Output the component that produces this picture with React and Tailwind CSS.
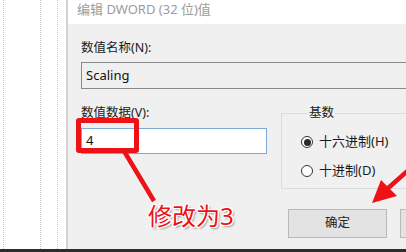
const RadioDot = ({ checked }) => (
    <span className="w-[12px] h-[12px] rounded-full border border-[#333] bg-white flex items-center justify-center">
        {checked && <span className="w-[7px] h-[7px] rounded-full bg-[#2a2a2a]" />}
    </span>
)

const App = () => {
    return (
        <div
            className="relative w-[406px] h-[252px] overflow-hidden flex flex-col bg-white text-[#1a1a1a]"
            style={{ fontFamily: '"Noto Sans", "Noto Sans CJK SC", sans-serif' }}>
            <div className="flex-1 flex min-h-0">
                {/* dotted column guides of the window behind */}
                <div className="w-[66px] flex shrink-0">
                    <div className="ml-[3px] h-full border-l border-dotted border-[#c4c4c4]" />
                    <div className="ml-[36px] h-full border-l border-dotted border-[#c4c4c4]" />
                    <div className="ml-[16px] h-full border-l border-dotted border-[#c4c4c4]" />
                </div>

                <div className="flex-1 flex flex-col border-l-2 border-[#d2d2d2] min-w-0">
                    <div className="h-[24px] bg-white pl-[9px] pt-[1px] text-[13px] leading-[16px] text-[#9c9c9c] whitespace-nowrap">
                        编辑 DWORD (32 位)值
                    </div>

                    <div className="flex-1 bg-[#f0f0f0] pl-[13px] pt-[16px] text-[12.5px]">
                        <div className="leading-[16px] h-[16px] whitespace-nowrap">数值名称(N):</div>
                        <div className="mt-[6px] h-[27px] w-[340px] border border-[#8a8a8a] bg-[#f0f0f0] pl-[4px] flex items-center text-[13px] text-[#111]">
                            Scaling
                        </div>

                        <div className="mt-[16px] flex">
                            <div className="w-[186px] shrink-0">
                                <div className="leading-[16px] h-[16px] whitespace-nowrap">数值数据(V):</div>
                                <div className="mt-[7px] h-[26px] border border-[#7ea7d8] bg-white pl-[4px] flex items-center text-[13px] text-[#111]">
                                    4
                                </div>
                            </div>

                            <fieldset className="ml-[14px] w-[160px] shrink-0 border border-[#dcdcdc] pl-[19px] pb-[7px]">
                                <legend className="ml-[7px] px-[1px] leading-[16px]">基数</legend>
                                <div className="mt-[11px] h-[20px] flex items-center gap-[6px] whitespace-nowrap text-[13px]">
                                    <RadioDot checked />
                                    十六进制(H)
                                </div>
                                <div className="mt-[9px] h-[20px] flex items-center gap-[6px] whitespace-nowrap text-[13px]">
                                    <RadioDot />
                                    十进制(D)
                                </div>
                            </fieldset>
                        </div>

                        <div className="mt-[20px] ml-[207px] flex gap-[13px]">
                            <button className="w-[99px] h-[29px] shrink-0 bg-[#e3e3e3] border border-[#b9b9b9] text-[12.5px] text-[#222]">
                                确定
                            </button>
                            <button className="w-[99px] h-[29px] shrink-0 bg-[#e3e3e3] border border-[#b9b9b9]" />
                        </div>
                    </div>
                </div>
            </div>
            <div className="h-[3px] bg-[#2d2d2d] shrink-0" />

            {/* red annotations */}
            <div className="absolute left-[76px] top-[118px] w-[63px] h-[35px] border-[5px] border-[#ec1218] rounded-[3px]" />
            <svg className="absolute inset-0 pointer-events-none" width="406" height="252" viewBox="0 0 406 252">
                <line x1="124" y1="151" x2="154" y2="201" stroke="#ec1218" strokeWidth="4.5" />
                <line x1="386" y1="190" x2="412" y2="167" stroke="#ec1218" strokeWidth="4.5" />
                <polygon points="372,203 397,196 381,180" fill="#ec1218" />
            </svg>
            <div
                className="absolute left-[148px] top-[202px] text-[24px] leading-[28px] text-[#ec1218] whitespace-nowrap"
                style={{ textShadow: "1px 0 #fff, -1px 0 #fff, 0 1px #fff, 0 -1px #fff, 1px 1px #fff, -1px -1px #fff, 1px -1px #fff, -1px 1px #fff, 2px 2px 2px rgba(0,0,0,0.35)" }}>
                修改为3
            </div>
        </div>
    )
}
export default App
